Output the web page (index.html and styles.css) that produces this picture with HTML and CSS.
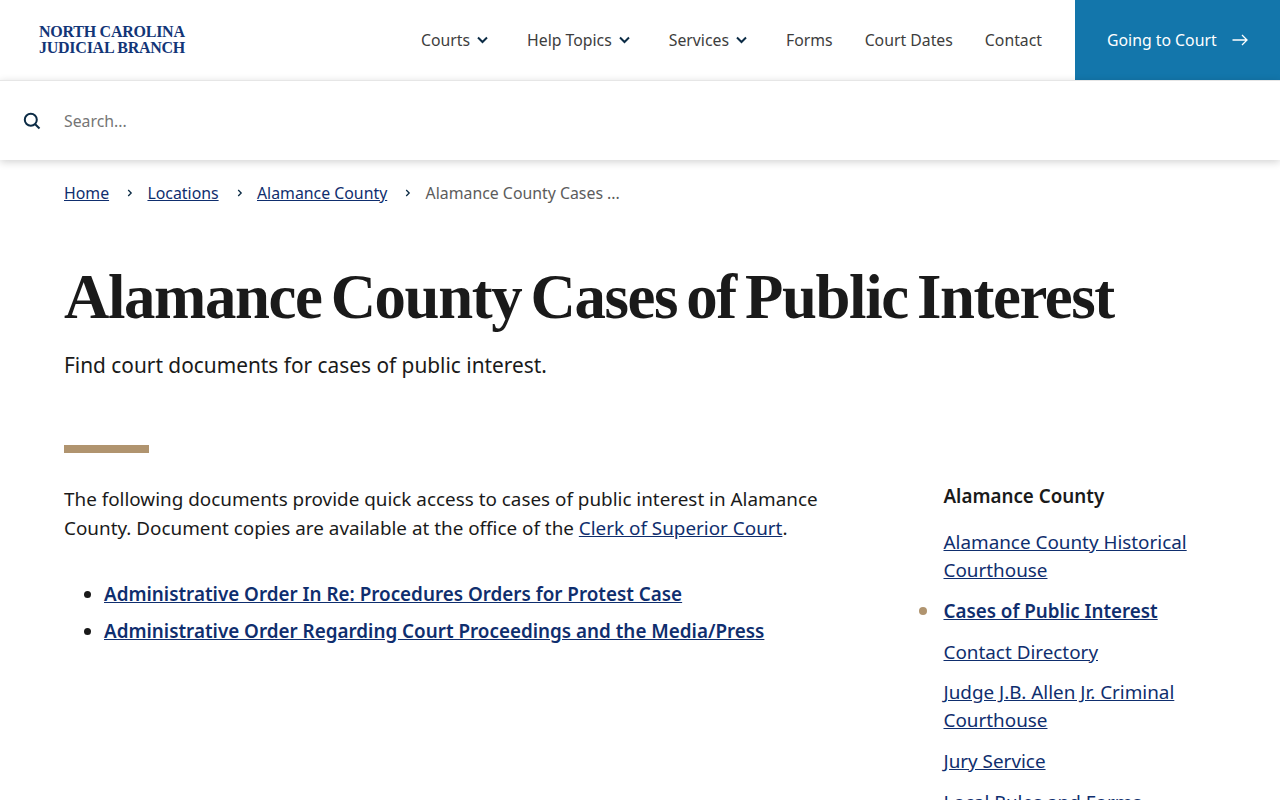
FILE: index.html
```html
<!DOCTYPE html>
<html lang="en">
<head>
<meta charset="utf-8">
<title>Alamance County Cases of Public Interest</title>
<link rel="stylesheet" href="styles.css">
</head>
<body>
<header class="site-header">
  <a class="logo" href="#"><span>NORTH CAROLINA</span><span>JUDICIAL BRANCH</span></a>
  <nav class="main-nav">
    <a href="#" class="nav-item has-caret">Courts<svg class="caret" viewBox="0 0 11 8" width="11" height="8"><path d="M1 1.500 5.500 6 10 1.500"/></svg></a>
    <a href="#" class="nav-item has-caret">Help Topics<svg class="caret" viewBox="0 0 11 8" width="11" height="8"><path d="M1 1.500 5.500 6 10 1.500"/></svg></a>
    <a href="#" class="nav-item has-caret">Services<svg class="caret" viewBox="0 0 11 8" width="11" height="8"><path d="M1 1.500 5.500 6 10 1.500"/></svg></a>
    <a href="#" class="nav-item">Forms</a>
    <a href="#" class="nav-item">Court Dates</a>
    <a href="#" class="nav-item">Contact</a>
  </nav>
  <a class="cta" href="#">Going to Court<svg class="cta-arrow" viewBox="0 0 16 12" width="16" height="12"><path d="M0.500 6H15M10 1l5 5-5 5"/></svg></a>
</header>
<div class="search-bar">
  <svg class="search-icon" viewBox="0 0 18 18" width="18" height="18"><circle cx="7.800" cy="7.800" r="6"/><path d="M12.200 12.200 16.500 16.500"/></svg>
  <span class="search-placeholder">Search...</span>
</div>
<main class="page">
  <ol class="crumbs">
    <li><a href="#">Home</a></li>
    <li class="sep"><svg viewBox="0 0 6 8" width="6" height="8"><path d="M1.200 1 4.200 4l-3 3"/></svg></li>
    <li><a href="#">Locations</a></li>
    <li class="sep"><svg viewBox="0 0 6 8" width="6" height="8"><path d="M1.200 1 4.200 4l-3 3"/></svg></li>
    <li><a href="#">Alamance County</a></li>
    <li class="sep"><svg viewBox="0 0 6 8" width="6" height="8"><path d="M1.200 1 4.200 4l-3 3"/></svg></li>
    <li class="current">Alamance County Cases ...</li>
  </ol>
  <h1 class="title">Alamance County Cases of Public Interest</h1>
  <p class="lede">Find court documents for cases of public interest.</p>
  <div class="rule"></div>
  <div class="columns">
    <article class="content">
      <p class="intro">The following documents provide quick access to cases of public interest in Alamance County. Document copies are available at the office of the <a href="#">Clerk of Superior Court</a>.</p>
      <ul class="docs">
        <li><a href="#">Administrative Order In Re: Procedures Orders for Protest Case</a></li>
        <li><a href="#">Administrative Order Regarding Court Proceedings and the Media/Press</a></li>
      </ul>
    </article>
    <aside class="side">
      <h2 class="side-title">Alamance County</h2>
      <ul class="side-list">
        <li><a href="#">Alamance County Historical Courthouse</a></li>
        <li class="active"><a href="#">Cases of Public Interest</a></li>
        <li><a href="#">Contact Directory</a></li>
        <li><a href="#">Judge J.B. Allen Jr. Criminal Courthouse</a></li>
        <li><a href="#">Jury Service</a></li>
        <li><a href="#">Local Rules and Forms</a></li>
      </ul>
    </aside>
  </div>
</main>
</body>
</html>
```
FILE: styles.css
```css
* { box-sizing: border-box; }
html, body { margin: 0; padding: 0; height: 800px; overflow: hidden; background: #fff; }
body { font-family: "Noto Sans", "Open Sans", sans-serif; color: #1a1a1a; }
a { color: #0f2e6e; }

.site-header { display: flex; align-items: center; height: 80px; padding-left: 39px; background: #fff; position: relative; }
.logo { display: flex; flex-direction: column; font-family: "Liberation Serif", serif; font-weight: 700; font-size: 16px; line-height: 16px; color: #123577; text-decoration: none; width: 200px; letter-spacing: -0.25px; }
.main-nav { display: flex; align-items: center; margin-left: auto; gap: 32px; padding-right: 33px; }
.nav-item { display: flex; align-items: center; font-size: 15.800px; line-height: 24px; color: #3d3d3d; text-decoration: none; }
.caret { margin-left: 7px; }
.caret path { fill: none; stroke: #0b2b45; stroke-width: 2; }
.has-caret { margin-right: 7px; }
.cta { display: flex; align-items: center; justify-content: space-between; width: 205px; height: 80px; padding: 0 32px; background: #1376ab; color: #fff; font-size: 15.800px; text-decoration: none; }
.cta-arrow path { fill: none; stroke: #fff; stroke-width: 1.300; }

.search-bar { display: flex; align-items: center; height: 80px; padding-left: 23px; border-top: 1px solid #e6e6e6; box-shadow: 0 2px 8px rgba(0,0,0,.18); background: #fff; position: relative; }
.search-icon { margin-right: 23px; }
.search-icon circle, .search-icon path { fill: none; stroke: #0b2b45; stroke-width: 2; }
.search-placeholder { font-size: 15.800px; color: #757575; }

.page { padding: 0 64px; }
.crumbs { display: flex; align-items: center; list-style: none; margin: 0; padding: 21px 0 0; gap: 16.200px; font-size: 15.850px; line-height: 24px; }
.crumbs .sep { display: flex; margin: 0 -2px 0 2px; }
.crumbs .sep path { fill: none; stroke: #0b2b45; stroke-width: 1.300; }
.crumbs .current { color: #5c5c5c; }

.title { margin: 54px 0 0; font-family: "Liberation Serif", serif; font-weight: 700; font-size: 62.800px; line-height: 76px; letter-spacing: -1.400px; word-spacing: -5px; color: #1a1a1a; }
.lede { margin: 14px 0 0; font-size: 20.850px; line-height: 32px; }
.rule { width: 85px; height: 8px; margin-top: 64px; background: #b0946f; }

.columns { display: flex; margin-top: 32px; }
.content { width: 879.500px; flex: none; }
.intro { margin: 0; width: 790px; font-size: 18.880px; line-height: 29px; }
.docs { margin: 37px 0 0; padding-left: 40px; font-size: 18.830px; font-weight: 600; line-height: 29px; }
.docs li { margin-bottom: 8px; }
.side { flex: 1; }
.side-title { margin: -3px 0 0; font-size: 18.800px; font-weight: 600; line-height: 28px; }
.side-list { list-style: none; margin: 18px 0 0; padding: 0; font-size: 18.880px; line-height: 28px; width: 265px; }
.side-list li { margin-bottom: 12.800px; position: relative; }
.side-list .active { font-weight: 600; font-size: 18.800px; }
.side-list .active::before { content: ""; position: absolute; left: -24.500px; top: 10px; width: 8px; height: 8px; border-radius: 50%; background: #b0946f; }
```
